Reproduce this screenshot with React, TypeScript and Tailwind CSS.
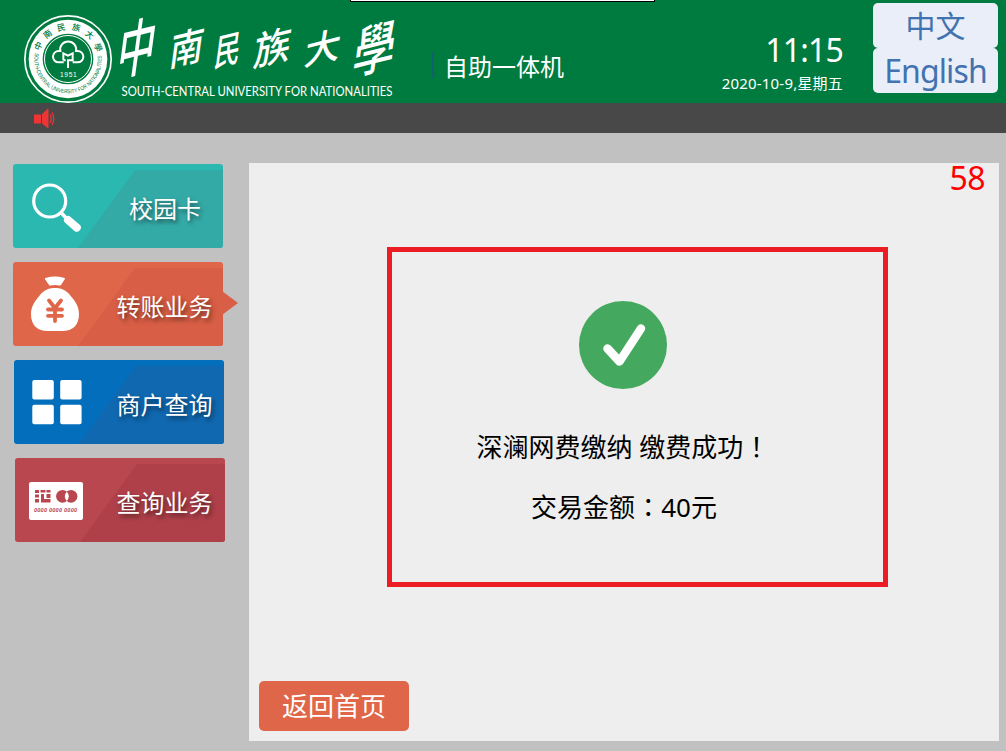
import React from "react";
import clsx from "clsx";

interface MenuItem {
  id: string;
  label: string;
  icon: React.ReactNode;
  base: string;
  shade: string;
  inset: string;
  textInset: string;
  active?: boolean;
}

const SearchIcon = () => (
  <svg className="w-[56px] h-[56px]" viewBox="0 0 56 56" fill="none" stroke="#fff">
    <circle cx="22.7" cy="23" r="16" strokeWidth="3.2" />
    <path d="M34 34.5l6 6.5" strokeWidth="3.6" />
    <path d="M41 42l8.8 7.6" strokeWidth="8" strokeLinecap="round" />
  </svg>
);

const MoneyBagIcon = () => (
  <svg className="w-[56px] h-[56px]" viewBox="0 0 56 56" fill="none">
    <path
      d="M18.4 3.8Q17 2.2 19.3 1.8Q28-.6 36.6 1.8Q38.8 2.2 37.4 3.8L34 9Q33.5 9.600 32.700 9.500Q28 8.500 23.300 9.500Q22.400 9.600 22 9Z"
      fill="#fff"
    />
    <path d="M28 12C36 11.500 41 16 45 21.500C49.500 27 52 32 52 38C52 49 46 55 35 55H21C10 55 4 49 4 38C4 32 6.500 27 11 21.500C15 16 20 11.500 28 12Z" fill="#fff" />
    <path d="M22 24.500l6 7.500l6-7.500M28 32v13M21 33.500h14M21 39.800h14" stroke="#e0664a" strokeWidth="3.800" strokeLinecap="round" strokeLinejoin="round" />
  </svg>
);

const GridIcon = () => (
  <svg className="w-[56px] h-[56px]" viewBox="0 0 56 56" fill="#fff">
    <rect x="4.300" y="6" width="21.500" height="19.500" rx="2" />
    <rect x="32.200" y="6" width="21.400" height="19.500" rx="2" />
    <rect x="4.300" y="30.700" width="21.500" height="19.500" rx="2" />
    <rect x="32.200" y="30.700" width="21.400" height="19.500" rx="2" />
  </svg>
);

const CardIcon = () => (
  <svg className="w-[56px] h-[56px]" viewBox="0 -1 56 56" fill="#b8474f">
    <rect x="0" y="9" width="54" height="38" rx="2" fill="#fff" />
    <path d="M6 17h4v3h-4zM6 21.500h4v3h-4zM6 26h4v3.500h-4zM11.500 17h5v2.500h-5zM12 21h3v5h5v3.500h-8zM17.500 17h4v2.500h-4zM17.500 21h4v4h-4zM18.500 26h3v3.500h-3z" />
    <circle cx="33.500" cy="23.300" r="6.400" />
    <circle cx="42" cy="23.300" r="6.400" />
    <path d="M37.800 18.700a6.400 6.400 0 0 1 0 9.200a6.400 6.400 0 0 1 0-9.200z" fill="#fff" />
    <text x="5" y="39.200" fontSize="5.500" textLength="43" fontStyle="italic" fontWeight="700" fontFamily="'Liberation Sans', sans-serif">
      0000 0000 0000
    </text>
  </svg>
);

const MENU: MenuItem[] = [
  { id: "card", label: "校园卡", icon: <SearchIcon />, base: "bg-[#2bb8b0]", shade: "bg-[#34aaa7]", inset: "ml-0", textInset: "pl-[24px]" },
  { id: "transfer", label: "转账业务", icon: <MoneyBagIcon />, base: "bg-[#e0664a]", shade: "bg-[#d85e45]", inset: "ml-0", textInset: "pl-[23px]", active: true },
  { id: "merchant", label: "商户查询", icon: <GridIcon />, base: "bg-[#036fbc]", shade: "bg-[#1068b0]", inset: "ml-px", textInset: "pl-[21px]" },
  { id: "query", label: "查询业务", icon: <CardIcon />, base: "bg-[#b8474f]", shade: "bg-[#af404a]", inset: "ml-0.5", textInset: "pl-[19px]" },
];

const CALLIGRAPHY = [
  { char: "中", x: 115, y: 76, size: 38, scaleY: 1.6 },
  { char: "南", x: 168, y: 67, size: 34, scaleY: 1.15 },
  { char: "民", x: 213, y: 67, size: 26, scaleY: 1.4 },
  { char: "族", x: 252, y: 67, size: 37, scaleY: 1.05 },
  { char: "大", x: 303, y: 66, size: 36, scaleY: 1 },
  { char: "學", x: 351, y: 75, size: 42, scaleY: 1.3 },
];

const Seal = () => (
  <svg className="w-[92px] h-[92px] shrink-0 overflow-visible" viewBox="66 39 276 276" fill="none">
    <defs>
      <path id="sealTop" d="M116 177a88 88 0 0 1 176 0" />
      <path id="sealBottom" d="M105 159A101 101 0 1 0 303 159" />
    </defs>
    <circle cx="204" cy="177" r="129.500" stroke="#fff" strokeWidth="5" />
    <circle cx="204" cy="177" r="118" fill="#fff" />
    <circle cx="204" cy="177" r="76" fill="#007b40" />
    <circle cx="204" cy="177" r="70.500" stroke="#fff" strokeWidth="3" />
    <g fill="#007b40">
      <text fontSize="25" fontWeight="500" fontFamily="'Noto Sans CJK TC', sans-serif">
        <textPath href="#sealTop" startOffset="24" textLength="232">中南民族大學</textPath>
      </text>
      <text fontSize="17" fontFamily="'Liberation Sans', sans-serif">
        <textPath href="#sealBottom" textLength="350" lengthAdjust="spacingAndGlyphs">SOUTH-CENTRAL UNIVERSITY FOR NATIONALITIES</textPath>
      </text>
    </g>
    <path
      d="M191 187H176A17 17 0 0 1 176 153H181A24 24 0 1 1 228 153H233A17 17 0 0 1 233 187H218M190 181V160L204 167L218 160V181H204V204M190 181H197"
      stroke="#fff"
      strokeWidth="6"
    />
    <text x="180" y="232" fontSize="20" fill="#fff" textLength="50" fontFamily="'Liberation Sans', sans-serif">1951</text>
  </svg>
);

const Wordmark = () => (
  <svg className="w-[286px] h-[92px] shrink-0 overflow-visible" viewBox="114 13 286 92" fill="#fff">
    {CALLIGRAPHY.map((c) => (
      <text
        key={c.char}
        transform={`translate(${c.x} ${c.y}) skewY(-14) skewX(-8) scale(1 ${c.scaleY})`}
        fontSize={c.size}
        fontWeight="500"
        fontFamily="'Noto Sans CJK TC', sans-serif"
      >
        {c.char}
      </text>
    ))}
    <text x="121.500" y="96.300" fontSize="13" textLength="271" lengthAdjust="spacingAndGlyphs" fontFamily="Lato, sans-serif">
      SOUTH-CENTRAL UNIVERSITY FOR NATIONALITIES
    </text>
  </svg>
);

const Header = () => (
  <header className="relative flex h-[103px] bg-[#007b40] text-white">
    <div className="absolute left-[350px] top-0 w-[305px] h-0.5 bg-white border-x border-b border-black" />
    <div className="flex pl-[22px] pt-[13px]">
      <Seal />
      <Wordmark />
      <div className="flex items-center h-[26px] mt-[39px] ml-8">
        <span className="w-0.5 h-[26px] bg-[#14606c]" />
        <h1 className="ml-[10px] mt-[3px] text-2xl leading-6">自助一体机</h1>
      </div>
    </div>
    <div className="flex flex-col items-end w-[200px] ml-auto pt-[30px] mr-[30px]">
      <span className="text-[32px] leading-10 tracking-[-0.8px]">11:15</span>
      <span className="text-[15px] leading-[22px] mt-[2px] tracking-[0.2px]">2020-10-9,星期五</span>
    </div>
    <div className="flex flex-col w-[125px] mr-2 pt-[3px] text-[#4372b0] text-center">
      <button className="h-[45px] rounded-[5px] bg-[#e9eef8] text-[30px] leading-[44px]">中文</button>
      <button className="h-[45px] rounded-[5px] bg-[#e9eef8] text-[32px] leading-[44px] tracking-[-0.9px]">English</button>
    </div>
  </header>
);

const NoticeBar = () => (
  <div className="flex items-center h-[30px] bg-[#484848] pl-[34px]">
    <svg className="w-[21px] h-[21px]" viewBox="0 0 21 21" fill="#ee3535">
      <rect x="0" y="6.500" width="7" height="9" rx="0.500" />
      <path d="M8 6.200L13.500.8Q14.500.3 14.500 1.500V19.500Q14.500 20.500 13.500 20L8 15.500Z" />
      <path d="M16 6.500q2.300 4.200 0 8.500M18 4.500q3.500 6.200 0 12.500" fill="none" stroke="#ee3535" strokeWidth="1.300" />
    </svg>
  </div>
);

const MenuButton: React.FC<{ item: MenuItem }> = ({ item }) => (
  <button className={clsx("relative flex items-center w-[210px] h-[84px]", item.inset)}>
    <span className={clsx("absolute inset-0 rounded-[3px]", item.base)} />
    <span
      className={clsx(
        "absolute inset-x-0 bottom-0 top-1.5 rounded-br-[3px] [clip-path:polygon(122px_0,100%_0,100%_100%,65px_100%)]",
        item.shade
      )}
    />
    {item.active && (
      <span className="absolute left-[209px] top-[29px] w-4 h-6 bg-[#d85e45] [clip-path:polygon(0_0,100%_50%,0_100%)]" />
    )}
    <span className="relative w-14 ml-3.5">{item.icon}</span>
    <span
      className={clsx(
        "relative flex-1 flex justify-center text-2xl leading-9 text-white whitespace-nowrap pt-[6px] [text-shadow:2px_3px_4px_rgba(0,0,0,0.5)]",
        item.textInset
      )}
    >
      {item.label}
    </span>
  </button>
);

const ResultPanel = () => (
  <main className="relative flex flex-col w-[750px] h-[578px] bg-[#eee] text-black">
    <span className="self-end mr-[14px] -mt-[5px] text-[32px] leading-10 tracking-[-0.6px] text-[#f00]">58</span>
    <section className="flex flex-col items-center mt-[103px] -ml-0.5">
      <svg className="w-[88px] h-[88px]" viewBox="0 0 88 88" fill="none">
        <circle cx="44" cy="44" r="44" fill="#44a85f" />
        <path d="M28.500 47.500L40.500 60.500L62 27.500" stroke="#fff" strokeWidth="8.500" strokeLinecap="round" strokeLinejoin="round" />
      </svg>
      <p className="mt-[39px] text-[26px] leading-[36px]">
        深澜网费缴纳 缴费成功<span className="font-['Noto_Sans_CJK_TC',sans-serif]">！</span>
      </p>
      <p className="mt-[23px] ml-0.5 text-[26px] leading-[36px]">
        交易金额<span className="font-['Noto_Sans_CJK_TC',sans-serif]">：</span>40元
      </p>
    </section>
    <button className="w-[150px] h-[50px] mt-auto mb-2.5 ml-2.5 rounded-[5px] bg-[#e0664a] text-white text-[26px] leading-[48px]">
      返回首页
    </button>
    <div className="absolute left-[138px] top-[84px] w-[501px] h-[340px] border-[5px] border-[#ec1c24]" />
  </main>
);

export default function App() {
  return (
    <div className="w-[1006px] h-[751px] overflow-hidden bg-[#c1c1c1] font-['Noto_Sans','Noto_Sans_CJK_SC',sans-serif]">
      <Header />
      <NoticeBar />
      <div className="flex pt-[30px]">
        <nav className="flex flex-col gap-3.5 w-[249px] pl-[13px] pt-px">
          {MENU.map((item) => (
            <MenuButton key={item.id} item={item} />
          ))}
        </nav>
        <ResultPanel />
      </div>
    </div>
  );
}
